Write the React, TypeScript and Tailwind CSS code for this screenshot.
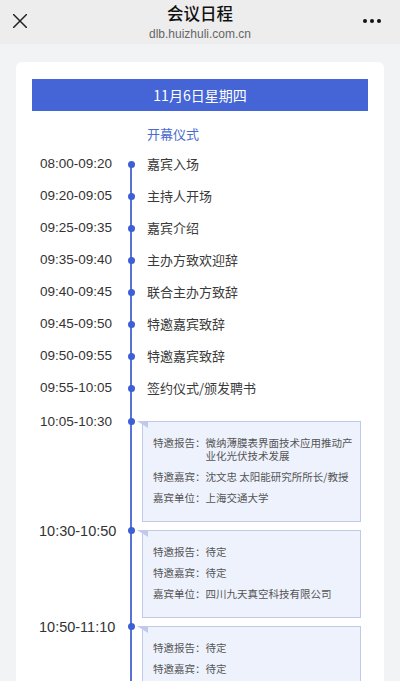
import React from "react";

const cjk = { fontFamily: '"Noto Sans CJK SC", "Noto Sans", sans-serif' };
const latin = { fontFamily: '"Liberation Sans", Arial, "Noto Sans CJK SC", sans-serif' };

type RailProps = { topClass: string; showTop: boolean };

function Rail({ topClass, showTop }: RailProps) {
  return (
    <div className="w-[2px] shrink-0 flex flex-col items-center">
      <div className={`w-full shrink-0 ${topClass} ${showTop ? "bg-[#5873d2]" : "bg-transparent"}`} />
      <div className="relative z-10 w-[7px] h-[7px] shrink-0 -my-[3.5px] rounded-full bg-[#3c5fd6]" />
      <div className="w-full flex-1 bg-[#5873d2]" />
    </div>
  );
}

const simpleRows: [string, string][] = [
  ["08:00-09:20", "嘉宾入场"],
  ["09:20-09:05", "主持人开场"],
  ["09:25-09:35", "嘉宾介绍"],
  ["09:35-09:40", "主办方致欢迎辞"],
  ["09:40-09:45", "联合主办方致辞"],
  ["09:45-09:50", "特邀嘉宾致辞"],
  ["09:50-09:55", "特邀嘉宾致辞"],
  ["09:55-10:05", "签约仪式/颁发聘书"],
];

type Session = {
  time: string;
  big: boolean;
  items: [string, string][];
};

const sessions: Session[] = [
  {
    time: "10:05-10:30",
    big: false,
    items: [
      ["特邀报告：", "微纳薄膜表界面技术应用推动产业化光伏技术发展"],
      ["特邀嘉宾：", "沈文忠 太阳能研究所所长/教授"],
      ["嘉宾单位：", "上海交通大学"],
    ],
  },
  {
    time: "10:30-10:50",
    big: true,
    items: [
      ["特邀报告：", "待定"],
      ["特邀嘉宾：", "待定"],
      ["嘉宾单位：", "四川九天真空科技有限公司"],
    ],
  },
  {
    time: "10:50-11:10",
    big: true,
    items: [
      ["特邀报告：", "待定"],
      ["特邀嘉宾：", "待定"],
      ["嘉宾单位：", "待定"],
    ],
  },
];

function SessionRow({ s, first }: { s: Session; first: boolean }) {
  return (
    <div className="flex">
      <div className={`w-[90px] shrink-0 ${first ? "pt-[9px]" : "pt-0"}`}>
        <div
          className={`leading-[18px] text-[#333] ${s.big ? "text-[14.5px] -ml-[1px]" : "text-[13.5px]"}`}
          style={latin}
        >
          {s.time}
        </div>
      </div>
      <Rail topClass={first ? "h-[17px]" : "h-[8px]"} showTop={true} />
      <div className={`flex-1 pl-[10px] pr-[7px] ${first ? "pt-[17px]" : "pt-[8px]"}`}>
        <div className="relative border border-[#c0c9ea] bg-[#eef2fd] pt-[14px] pb-[17px] pl-[10px] pr-[6px]">
          <svg
            className="absolute -left-[6px] -top-[1px]"
            width="11"
            height="8"
            viewBox="0 0 11 8"
          >
            <polygon points="0,0 11,0 11,7" fill="#c0c9ea" />
          </svg>
          <div className="flex flex-col gap-[8px]">
            {s.items.map(([k, v], i) => (
              <div key={i} className="flex text-[10.5px] leading-[13px] text-[#555]" style={cjk}>
                <span className="shrink-0">{k}</span>
                <span className="flex-1">{v}</span>
              </div>
            ))}
          </div>
        </div>
      </div>
    </div>
  );
}

export default function App() {
  return (
    <div className="w-[400px] min-h-[681px] bg-[#f2f3f5]" style={cjk}>
      {/* Header */}
      <div className="h-[44px] bg-[#ededed] flex items-start">
        <div className="w-[60px] shrink-0 pl-[13px] pt-[14px]">
          <svg width="14" height="14" viewBox="0 0 14 14">
            <path d="M0.5 0.5 L13.5 13.5 M13.5 0.5 L0.5 13.5" stroke="#222" strokeWidth="1.5" strokeLinecap="round" />
          </svg>
        </div>
        <div className="flex-1 flex flex-col items-center pt-[3px]">
          <div className="text-[16.5px] leading-[21px] font-medium text-[#111]" style={cjk}>
            会议日程
          </div>
          <div className="text-[12px] leading-[16px] text-[#666] mt-[2px]" style={latin}>
            dlb.huizhuli.com.cn
          </div>
        </div>
        <div className="w-[60px] shrink-0 flex justify-end items-center gap-[3px] pr-[19px] pt-[19px]">
          <span className="w-[4px] h-[4px] rounded-full bg-[#111]" />
          <span className="w-[4px] h-[4px] rounded-full bg-[#111]" />
          <span className="w-[4px] h-[4px] rounded-full bg-[#111]" />
        </div>
      </div>

      {/* Body */}
      <div className="px-[16px] pt-[18px]">
        <div className="bg-white rounded-[6px] px-[16px] pt-[17px] pb-[20px]">
          <div className="h-[32px] bg-[#4565d6] flex items-center justify-center text-white text-[14px]" style={cjk}>
            11月6日星期四
          </div>

          <div className="pl-[8px] mt-[9px]">
            {/* Section title */}
            <div className="flex h-[28px]">
              <div className="w-[90px] shrink-0" />
              <div className="w-[2px] shrink-0" />
              <div className="flex-1 pl-[15px] flex items-center text-[13px] text-[#4a6bd0]" style={cjk}>
                开幕仪式
              </div>
            </div>

            {simpleRows.map(([t, label], i) => (
              <div key={i} className="flex h-[32px]">
                <div className="w-[90px] shrink-0 flex items-center pt-[1px] text-[13.5px] text-[#333]" style={latin}>
                  {t}
                </div>
                <Rail topClass="h-[16px]" showTop={i !== 0} />
                <div className="flex-1 pl-[15px] flex items-center text-[13px] text-[#3a3a3a]" style={cjk}>
                  {label}
                </div>
              </div>
            ))}

            {sessions.map((s, i) => (
              <SessionRow key={i} s={s} first={i === 0} />
            ))}
          </div>
        </div>
      </div>
    </div>
  );
}
